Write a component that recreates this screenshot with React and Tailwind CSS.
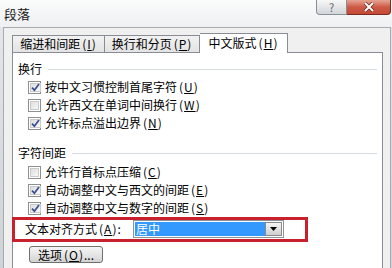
import React from 'react';

const FONT = '"Noto Sans CJK SC", "Liberation Sans", sans-serif';

function Mn({ k }) {
  return (
    <span className="ml-[2px] tracking-[1px]">
      (<span className="underline underline-offset-1">{k}</span>)
    </span>
  );
}

function CheckBox({ checked }) {
  return (
    <span className="w-[13px] h-[13px] shrink-0 border border-[#8e8f8f] bg-white p-px flex">
      <span className="flex-1 border border-[#c8cacc] bg-gradient-to-br from-[#dedede] to-[#f8f8f8] flex items-center justify-center">
        {checked && (
          <svg width="9" height="9" viewBox="0 0 9 9">
            <path d="M1 4.6 L3.4 7.2 L8 1" fill="none" stroke="#3a4d8f" strokeWidth="1.7" />
          </svg>
        )}
      </span>
    </span>
  );
}

function Row({ checked, text, k }) {
  return (
    <div className="h-[18px] flex items-center ml-[10px]">
      <CheckBox checked={checked} />
      <span className="ml-[4px] whitespace-nowrap">
        {text}
        <Mn k={k} />
      </span>
    </div>
  );
}

function GroupLabel({ children }) {
  return (
    <div className="h-[18px] flex items-center">
      <span className="whitespace-nowrap">{children}</span>
      <span className="flex-1 h-px bg-[#d5dbe0] ml-[6px]" />
    </div>
  );
}

export default function App() {
  return (
    <div
      className="w-[392px] h-[268px] overflow-hidden flex flex-col text-[12px] text-black bg-white"
      style={{ fontFamily: FONT }}
    >
      {/* title bar */}
      <div className="h-[27px] shrink-0 flex bg-gradient-to-b from-[#fbfbfb] to-[#eef0f2]">
        <div className="pl-[4px] pt-[4px] text-[13px] text-[#1a1a1a]">段落</div>
        <div className="ml-auto mr-px flex h-[15px]">
          <div className="w-[31px] rounded-bl-[4px] border border-t-0 border-[#8a8f96] bg-gradient-to-b from-[#f7f7f7] to-[#d3d6da] flex items-center justify-center text-[11px] text-[#666] leading-none">
            ?
          </div>
          <div className="w-[44px] rounded-br-[4px] border border-t-0 border-l-0 border-[#7a2a20] bg-gradient-to-b from-[#e6a494] via-[#cc5a46] to-[#c34a36] flex items-center justify-center">
            <svg width="12" height="10" viewBox="0 0 12 10">
              <path d="M2 1 L10 9 M10 1 L2 9" stroke="#6a2418" strokeWidth="3.4" />
              <path d="M2 1 L10 9 M10 1 L2 9" stroke="#ffffff" strokeWidth="2" />
            </svg>
          </div>
        </div>
      </div>

      {/* body */}
      <div className="flex-1 flex pl-[3px] pr-px bg-gradient-to-b from-[#e3e5e8] to-[#cfd2d6]">
        <div className="flex-1 flex flex-col border-l border-t border-r border-[#a7abb0] bg-[#f0f0f0] pt-[5px] pl-[8px] pr-[7px]">
          {/* tabs */}
          <div className="h-[19px] flex items-end shrink-0">
            <div className="w-[93px] h-[17px] border border-b-0 border-[#898c95] bg-gradient-to-b from-[#f2f2f2] to-[#e3e3e3] flex items-center justify-center whitespace-nowrap">
              缩进和间距<Mn k="I" />
            </div>
            <div className="w-[95px] h-[17px] border border-l-0 border-b-0 border-[#898c95] bg-gradient-to-b from-[#f2f2f2] to-[#e3e3e3] flex items-center justify-center whitespace-nowrap">
              换行和分页<Mn k="P" />
            </div>
            <div className="w-[88px] h-[20px] -mb-px relative z-10 border border-l-0 border-b-0 border-[#898c95] bg-white flex items-center justify-center whitespace-nowrap pb-[2px]">
              中文版式<Mn k="H" />
            </div>
          </div>

          {/* panel */}
          <div className="flex-1 border border-b-0 border-[#898c95] bg-white pl-[5px] pr-[5px] pt-[7px] flex flex-col">
            <GroupLabel>换行</GroupLabel>
            <Row checked text="按中文习惯控制首尾字符" k="U" />
            <Row text="允许西文在单词中间换行" k="W" />
            <Row checked text="允许标点溢出边界" k="N" />

            <div className="mt-[12px]">
              <GroupLabel>字符间距</GroupLabel>
            </div>
            <div className="mt-px">
              <Row text="允许行首标点压缩" k="C" />
            </div>
            <Row checked text="自动调整中文与西文的间距" k="E" />
            <Row checked text="自动调整中文与数字的间距" k="S" />

            {/* highlighted alignment row */}
            <div className="-ml-[6px] w-[296px] h-[25px] border-[3px] border-[#c9202d] flex items-start pl-[10px]">
              <span className="h-[18px] flex items-center whitespace-nowrap w-[108px]">
                文本对齐方式<Mn k="A" />:
              </span>
              <div className="w-[151px] h-[18px] border border-[#8d9299] bg-white flex p-px">
                <div className="flex-1 bg-[#3399ff] text-white flex items-center pl-px leading-none">居中</div>
                <div className="w-[17px] border border-[#8a8a8a] bg-gradient-to-b from-[#f5f5f5] to-[#cfcfcf] flex items-center justify-center">
                  <svg width="7" height="4" viewBox="0 0 7 4">
                    <path d="M0 0 H7 L3.5 4 Z" fill="#000" />
                  </svg>
                </div>
              </div>
            </div>

            <div className="mt-[4px] ml-[11px] w-[74px] h-[17px] rounded-[3px] border border-[#707070] bg-gradient-to-b from-[#f4f4f4] via-[#e6e6e6] to-[#d2d2d2] flex items-center justify-center whitespace-nowrap">
              选项<Mn k="O" />...
            </div>
          </div>
        </div>
      </div>
    </div>
  );
}
